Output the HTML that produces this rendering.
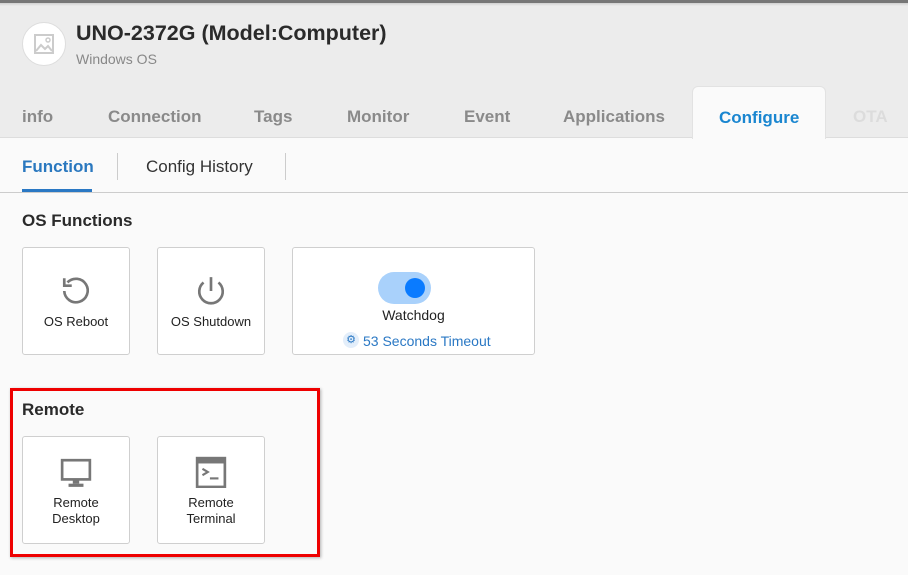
<!DOCTYPE html>
<html><head><style>
*{margin:0;padding:0;box-sizing:border-box}
body{width:908px;height:575px;overflow:hidden;background:#fafafa;font-family:"Liberation Sans",Arial,sans-serif;position:relative}
.hdr{position:absolute;left:0;top:0;width:908px;height:138px;background:#ececec;border-top:3px solid #777;border-bottom:1px solid #ddd}
.sh{position:absolute;left:0;top:3px;width:908px;height:3px;background:linear-gradient(#cfcfcf,#ececec)}
.abs{position:absolute;white-space:nowrap}
.tab{position:absolute;top:107px;font-size:17px;font-weight:bold;color:#8a8a8a}
.card{position:absolute;background:#fff;border:1px solid #cfcfcf;border-radius:3px;text-align:center;font-size:13px;color:#222}
h3{position:absolute;font-size:17px;font-weight:bold;color:#2a2a2a}
</style></head><body>
<div class="hdr"></div><div class="sh"></div>
<div class="abs" style="left:22px;top:22px;width:44px;height:44px;border-radius:50%;background:#fff;border:1px solid #ddd"></div>
<svg class="abs" style="left:34px;top:34px" width="20" height="20" viewBox="0 0 20 20"><rect x="1" y="1" width="18" height="18" fill="none" stroke="#ccc" stroke-width="2"/><path d="M2 17l5-6 4 4 3-3 4 5" fill="none" stroke="#ccc" stroke-width="2"/><circle cx="14" cy="6" r="2" fill="none" stroke="#ccc" stroke-width="1.5"/></svg>
<div class="abs" style="left:76px;top:21px;font-size:21.5px;font-weight:bold;color:#2a2a2a">UNO-2372G (Model:Computer)</div>
<div class="abs" style="left:76px;top:51px;font-size:14px;color:#888">Windows OS</div>
<div class="abs" style="left:692px;top:86px;width:134px;height:53px;background:#fafafa;border-radius:6px 6px 0 0;border:1px solid #e2e2e2;border-bottom:none"></div>
<div class="tab" style="left:22px">info</div>
<div class="tab" style="left:108px">Connection</div>
<div class="tab" style="left:254px">Tags</div>
<div class="tab" style="left:347px">Monitor</div>
<div class="tab" style="left:464px">Event</div>
<div class="tab" style="left:563px">Applications</div>
<div class="tab" style="left:719px;top:108px;color:#1a86d0">Configure</div>
<div class="tab" style="left:853px;color:#dcdcdc">OTA</div>
<div class="abs" style="left:22px;top:157px;font-size:17px;font-weight:bold;color:#2a78bf">Function</div>
<div class="abs" style="left:22px;top:189px;width:70px;height:3px;background:#2a78c4"></div>
<div class="abs" style="left:117px;top:153px;width:1px;height:27px;background:#ccc"></div>
<div class="abs" style="left:146px;top:157px;font-size:17px;color:#333">Config History</div>
<div class="abs" style="left:285px;top:153px;width:1px;height:27px;background:#ccc"></div>
<div class="abs" style="left:0;top:192px;width:908px;height:1px;background:#ccc"></div>
<h3 style="left:22px;top:211px">OS Functions</h3>
<div class="card" style="left:22px;top:247px;width:108px;height:108px">
<svg style="position:absolute;left:37px;top:27px" width="32" height="32" viewBox="0 0 30 30"><path d="M7 7A11 11 0 1 1 4 15" fill="none" stroke="#777" stroke-width="2.5"/><path d="M4 3v7h7" fill="none" stroke="#777" stroke-width="2.5"/></svg>
<div style="position:absolute;top:66px;width:100%">OS Reboot</div></div>
<div class="card" style="left:157px;top:247px;width:108px;height:108px">
<svg style="position:absolute;left:37px;top:27px" width="32" height="32" viewBox="0 0 30 30"><path d="M15 2v13" stroke="#777" stroke-width="2.5"/><path d="M8 7A11 11 0 1 0 22 7" fill="none" stroke="#777" stroke-width="2.5"/></svg>
<div style="position:absolute;top:66px;width:100%">OS Shutdown</div></div>
<div class="card" style="left:292px;top:247px;width:243px;height:108px">
<div style="position:absolute;left:85px;top:24px;width:53px;height:32px;border-radius:16px;background:#a9d1fb"></div>
<div style="position:absolute;left:112px;top:30px;width:20px;height:20px;border-radius:50%;background:#0a7bff"></div>
<div style="position:absolute;top:59px;width:100%;font-size:14px">Watchdog</div>
<div style="position:absolute;left:50px;top:84px;width:16px;height:16px;border-radius:50%;background:#e3eefa;color:#2a78c4;font-size:11px;line-height:16px">⚙</div>
<div style="position:absolute;left:70px;top:85px;font-size:14px;color:#2a78c4">53 Seconds Timeout</div></div>
<div class="abs" style="left:10px;top:388px;width:310px;height:169px;border:3px solid #e00;box-shadow:1px 1px 3px rgba(0,0,0,.3)"></div>
<h3 style="left:22px;top:400px">Remote</h3>
<div class="card" style="left:22px;top:436px;width:108px;height:108px">
<svg style="position:absolute;left:37px;top:20px" width="32" height="32" viewBox="0 0 30 30"><rect x="2" y="3" width="26" height="18" fill="none" stroke="#777" stroke-width="2.5"/><rect x="12" y="21" width="6" height="4" fill="#777"/><rect x="8" y="25" width="14" height="3" fill="#777"/></svg>
<div style="position:absolute;top:58px;width:100%;line-height:16px">Remote<br>Desktop</div></div>
<div class="card" style="left:157px;top:436px;width:108px;height:108px">
<svg style="position:absolute;left:37px;top:19px" width="32" height="32" viewBox="0 0 30 30"><rect x="2" y="2" width="26" height="27" fill="none" stroke="#777" stroke-width="2.5"/><rect x="2" y="2" width="26" height="5" fill="#777"/><path d="M7 12l5 3-5 3" fill="none" stroke="#777" stroke-width="2"/><path d="M14 21h8" stroke="#777" stroke-width="2"/></svg>
<div style="position:absolute;top:58px;width:100%;line-height:16px">Remote<br>Terminal</div></div>
</body></html>
